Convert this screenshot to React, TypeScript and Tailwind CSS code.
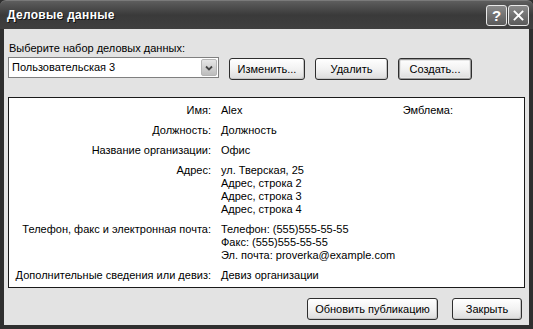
import React from "react";

const font = { fontFamily: '"Liberation Sans", Arial, sans-serif' };

const XpButton: React.FC<{ label: string; w: string; primary?: boolean }> = ({ label, w, primary }) => (
  <button
    className={`${w} h-[22px] rounded-[3px] border border-[#2e2e2e] bg-gradient-to-b from-[#ffffff] via-[#f2f2f2] to-[#dcdcdc] text-[11px] leading-[13px] text-black flex items-center justify-center ${
      primary ? "shadow-[inset_0_0_0_1px_#9a9a9a,inset_0_0_0_2px_#e8e8e8]" : "shadow-[inset_-1px_-1px_0_#c4c4c4]"
    }`}
  >
    {label}
  </button>
);

const Row: React.FC<{ label: string; lines: string[]; extra?: React.ReactNode }> = ({ label, lines, extra }) => (
  <>
    <div className="text-right whitespace-nowrap">{label}</div>
    <div className="flex justify-between pr-[71px] whitespace-nowrap">
      <div className="flex flex-col">
        {lines.map((l) => (
          <span key={l}>{l}</span>
        ))}
      </div>
      {extra && <span>{extra}</span>}
    </div>
  </>
);

export default function App() {
  return (
    <div className="w-[533px] h-[329px] flex flex-col bg-[#2f2f2f] text-black overflow-hidden" style={font}>
      {/* title bar */}
      <div className="h-[29px] shrink-0 flex items-center justify-between pl-[7px] pr-[4px] bg-gradient-to-b from-[#5e5e5e] via-[#3a3a3a] to-[#3f3f3f] border-t border-[#7a7a7a] rounded-t-[6px]">
        <span className="text-white text-[12px] font-bold tracking-[0.3px] [text-shadow:1px_1px_0_#111]">
          Деловые данные
        </span>
        <div className="flex gap-[1px]">
          <div className="w-[21px] h-[21px] rounded-[3px] border border-[#e8e8e8] bg-gradient-to-b from-[#8a8a8a] to-[#5a5a5a] flex items-center justify-center text-white font-bold text-[15px] leading-none">
            ?
          </div>
          <div className="w-[21px] h-[21px] rounded-[3px] border border-[#e8e8e8] bg-gradient-to-b from-[#8a8a8a] to-[#5a5a5a] flex items-center justify-center">
            <svg width="13" height="13" viewBox="0 0 13 13">
              <path d="M2.5 2.5 L10.5 10.5 M10.5 2.5 L2.5 10.5" stroke="white" strokeWidth="1.8" strokeLinecap="square" />
            </svg>
          </div>
        </div>
      </div>

      {/* body */}
      <div className="flex-1 mx-[4px] mb-[4px] bg-[#e3e3e3] px-[4px] pt-[13px] flex flex-col text-[11px] leading-[13px]">
        <div className="pl-[1px]">Выберите набор деловых данных:</div>

        <div className="mt-[2px] flex items-start">
          <div className="w-[211px] h-[21px] bg-white border border-[#7f7f7f] flex items-center justify-between pl-[3px] pr-[1px]">
            <span>Пользовательская 3</span>
            <div className="w-[16px] h-[17px] rounded-[2px] border border-[#b5b5b5] bg-gradient-to-b from-[#e6e6e6] to-[#bdbdbd] flex items-center justify-center">
              <svg width="8" height="6" viewBox="0 0 8 6">
                <path d="M1 1.5 L4 4.5 L7 1.5" stroke="#444" strokeWidth="1.8" fill="none" />
              </svg>
            </div>
          </div>
          <div className="ml-[10px] mt-[1px] flex gap-[10px]">
            <XpButton label="Изменить..." w="w-[76px]" />
            <XpButton label="Удалить" w="w-[73px]" />
            <XpButton label="Создать..." w="w-[74px]" primary />
          </div>
        </div>

        {/* info panel */}
        <div className="mt-[17px] h-[191px] bg-white border border-[#1a1a1a] pt-[6px]">
          <div className="grid grid-cols-[202px_1fr] gap-x-[10px] gap-y-[7px]">
            <Row label="Имя:" lines={["Alex"]} extra="Эмблема:" />
            <Row label="Должность:" lines={["Должность"]} />
            <Row label="Название организации:" lines={["Офис"]} />
            <Row
              label="Адрес:"
              lines={["ул. Тверская, 25", "Адрес, строка 2", "Адрес, строка 3", "Адрес, строка 4"]}
            />
            <Row
              label="Телефон, факс и электронная почта:"
              lines={["Телефон: (555)555-55-55", "Факс: (555)555-55-55", "Эл. почта: proverka@example.com"]}
            />
            <Row label="Дополнительные сведения или девиз:" lines={["Девиз организации"]} />
          </div>
        </div>

        <div className="mt-[10px] flex justify-end gap-[14px] pr-[3px]">
          <XpButton label="Обновить публикацию" w="w-[131px]" />
          <XpButton label="Закрыть" w="w-[70px]" />
        </div>
      </div>
    </div>
  );
}
